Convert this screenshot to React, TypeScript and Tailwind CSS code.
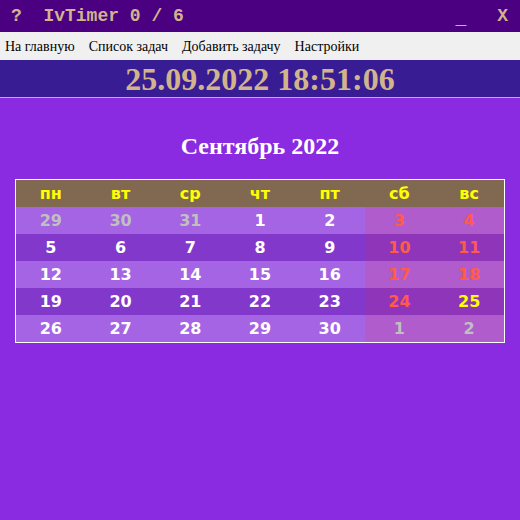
import React from "react";

type Cell = { d: number; muted?: boolean; today?: boolean };

const weeks: Cell[][] = [
  [{ d: 29, muted: true }, { d: 30, muted: true }, { d: 31, muted: true }, { d: 1 }, { d: 2 }, { d: 3 }, { d: 4 }],
  [{ d: 5 }, { d: 6 }, { d: 7 }, { d: 8 }, { d: 9 }, { d: 10 }, { d: 11 }],
  [{ d: 12 }, { d: 13 }, { d: 14 }, { d: 15 }, { d: 16 }, { d: 17 }, { d: 18 }],
  [{ d: 19 }, { d: 20 }, { d: 21 }, { d: 22 }, { d: 23 }, { d: 24 }, { d: 25, today: true }],
  [{ d: 26 }, { d: 27 }, { d: 28 }, { d: 29 }, { d: 30 }, { d: 1, muted: true }, { d: 2, muted: true }],
];

const heads = ["пн", "вт", "ср", "чт", "пт", "сб", "вс"];

export default function App() {
  return (
    <div className="w-[520px] h-[520px] bg-[#8a2be2] flex flex-col overflow-hidden">
      <div className="h-[32px] bg-[#4b0082] flex items-center pl-[11px] text-[#d2b48c] font-bold text-[18px] [font-family:'Liberation_Mono',monospace]">
        <span className="whitespace-pre">?  IvTimer 0 / 6</span>
        <span className="ml-auto mt-[6px]">_</span>
        <span className="ml-[31px] mr-[12px]">X</span>
      </div>
      <div className="h-[28px] bg-[#f0f0f0] flex items-center gap-[14px] px-[5px] text-[14px] text-black [font-family:'Liberation_Serif',serif]">
        <span>На главную</span>
        <span>Список задач</span>
        <span>Добавить задачу</span>
        <span>Настройки</span>
      </div>
      <div className="h-[38px] bg-[#371c94] border-b border-[#d2b48c] flex items-center justify-center text-[#d2b48c] font-bold text-[32px] leading-none [font-family:'Liberation_Serif',serif]">
        25.09.2022 18:51:06
      </div>
      <div className="text-center text-white font-bold text-[24px] mt-[34px] leading-[28px] [font-family:'Liberation_Serif',serif]">
        Сентябрь 2022
      </div>
      <div className="mx-[15px] mt-[19px] border border-white [font-family:'DejaVu_Sans',sans-serif] font-bold text-[16px]">
        <div className="grid grid-cols-7 h-[27px] bg-[#816850] text-[#ffff00] items-center text-center">
          {heads.map((h) => (
            <span key={h}>{h}</span>
          ))}
        </div>
        {weeks.map((w, i) => (
          <div key={i} className={`grid grid-cols-7 h-[27px] ${i % 2 === 0 ? "bg-[#a564e3]" : "bg-[#8238cb]"}`}>
            {w.map((c, j) => {
              const weekend = j >= 5;
              let color = "text-white";
              if (c.muted) color = "text-[#c0c0c0]";
              else if (c.today) color = "text-[#ffff00]";
              else if (weekend) color = "text-[#ff5a4c]";
              let bg = "";
              if (weekend) bg = i % 2 === 0 ? "bg-[#b05ccc]" : "bg-[#8f35b9]";
              return (
                <div key={j} className={`flex items-center justify-center ${bg} ${color}`}>
                  {c.d}
                </div>
              );
            })}
          </div>
        ))}
      </div>
    </div>
  );
}
